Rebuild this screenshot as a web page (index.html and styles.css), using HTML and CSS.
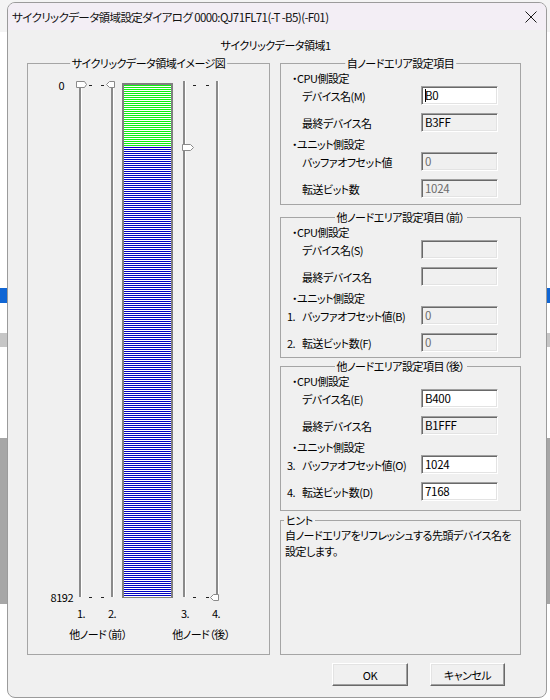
FILE: index.html
```html
<!DOCTYPE html>
<html lang="ja">
<head>
<meta charset="utf-8">
<title>サイクリックデータ領域設定ダイアログ</title>
<link rel="stylesheet" href="styles.css">
</head>
<body>
<div class="window">
  <div class="titlebar">
    <span class="title">サイクリックデータ領域設定ダイアログ 0000:QJ71FL71(-T -B5)(-F01)</span>
    <svg class="close" width="12" height="12" viewBox="0 0 12 12"><path d="M0.5 0.5L11.5 11.5M11.5 0.5L0.5 11.5" stroke="#1a1a1a" stroke-width="1" fill="none"/></svg>
  </div>
  <div class="client">
    <div class="subtitle">サイクリックデータ領域1</div>
    <div class="main">
      <div class="group image-group">
        <span class="legend">サイクリックデータ領域イメージ図</span>
        <div class="diagram">
          <div class="scale"><span class="s-top">0</span><span class="s-bottom">8192</span></div>
          <svg class="chart" width="149" height="524" viewBox="0 0 149 524" shape-rendering="crispEdges">
            <defs>
              <pattern id="pg" width="4" height="2" patternUnits="userSpaceOnUse">
                <rect width="4" height="2" fill="#ffffff"/>
                <rect width="4" height="1" fill="#10ee10"/>
              </pattern>
              <pattern id="pb" width="4" height="2" patternUnits="userSpaceOnUse">
                <rect width="4" height="2" fill="#ffffff"/>
                <rect width="4" height="1" fill="#0000c4"/>
              </pattern>
            </defs>
            <rect x="5" y="4" width="2" height="514" fill="#8a8a8a"/>
            <rect x="7" y="4" width="1" height="514" fill="#ffffff"/>
            <rect x="37" y="4" width="2" height="514" fill="#8a8a8a"/>
            <rect x="39" y="4" width="1" height="514" fill="#ffffff"/>
            <rect x="48" y="4" width="51" height="515" fill="#808080"/>
            <rect x="50" y="6" width="47" height="512" fill="#ffffff"/>
            <rect x="50" y="6" width="47" height="62" fill="url(#pg)"/>
            <rect x="50" y="68" width="47" height="449" fill="url(#pb)"/>
            <rect x="109" y="2" width="2" height="516" fill="#8a8a8a"/>
            <rect x="111" y="2" width="1" height="516" fill="#ffffff"/>
            <rect x="142" y="2" width="2" height="516" fill="#8a8a8a"/>
            <rect x="144" y="2" width="1" height="516" fill="#ffffff"/>
            <g fill="#222">
              <rect x="15" y="6" width="3" height="1"/>
              <rect x="27" y="6" width="3" height="1"/>
              <rect x="119" y="6" width="3" height="1"/>
              <rect x="132" y="6" width="3" height="1"/>
              <rect x="15" y="518" width="3" height="1"/>
              <rect x="27" y="518" width="3" height="1"/>
              <rect x="119" y="518" width="3" height="1"/>
              <rect x="132" y="518" width="3" height="1"/>
            </g>
            <g shape-rendering="auto" fill="#ffffff" stroke="#8a8a8a">
              <polygon points="2.5,2.5 10.5,2.5 12.5,5.5 10.5,8.5 2.5,8.5"/>
              <polygon points="40.5,2.5 35.5,2.5 32.5,5.5 35.5,8.5 40.5,8.5"/>
              <polygon points="108.5,65.5 116.5,65.5 119.5,68.5 116.5,71.5 108.5,71.5"/>
              <polygon points="144.5,515.5 139.5,515.5 136.5,518.5 139.5,521.5 144.5,521.5"/>
            </g>
          </svg>
        </div>
        <div class="track-nums">
          <span class="tn tn1">1.</span><span class="tn tn2">2.</span><span class="tn tn3">3.</span><span class="tn tn4">4.</span>
        </div>
        <div class="node-names">
          <span class="nn nn1">他ノード（前）</span><span class="nn nn2">他ノード（後）</span>
        </div>
      </div>

      <div class="right">
        <div class="group g1">
          <span class="legend">自ノードエリア設定項目</span>
          <div class="sec">・CPU側設定</div>
          <div class="field"><span class="num"></span><span class="label">デバイス名(M)</span><div class="box on"><span class="caret"></span>B0</div></div>
          <div class="field"><span class="num"></span><span class="label">最終デバイス名</span><div class="box">B3FF</div></div>
          <div class="sec">・ユニット側設定</div>
          <div class="field"><span class="num"></span><span class="label">バッファオフセット値</span><div class="box off">0</div></div>
          <div class="field"><span class="num"></span><span class="label">転送ビット数</span><div class="box off">1024</div></div>
        </div>

        <div class="group g2">
          <span class="legend">他ノードエリア設定項目（前）</span>
          <div class="sec">・CPU側設定</div>
          <div class="field"><span class="num"></span><span class="label">デバイス名(S)</span><div class="box off"></div></div>
          <div class="field"><span class="num"></span><span class="label">最終デバイス名</span><div class="box off"></div></div>
          <div class="sec">・ユニット側設定</div>
          <div class="field"><span class="num">1.</span><span class="label">バッファオフセット値(B)</span><div class="box off">0</div></div>
          <div class="field"><span class="num">2.</span><span class="label">転送ビット数(F)</span><div class="box off">0</div></div>
        </div>

        <div class="group g3">
          <span class="legend">他ノードエリア設定項目（後）</span>
          <div class="sec">・CPU側設定</div>
          <div class="field"><span class="num"></span><span class="label">デバイス名(E)</span><div class="box on">B400</div></div>
          <div class="field"><span class="num"></span><span class="label">最終デバイス名</span><div class="box">B1FFF</div></div>
          <div class="sec">・ユニット側設定</div>
          <div class="field"><span class="num">3.</span><span class="label">バッファオフセット値(O)</span><div class="box on">1024</div></div>
          <div class="field"><span class="num">4.</span><span class="label">転送ビット数(D)</span><div class="box on">7168</div></div>
        </div>

        <div class="group hint">
          <span class="legend left">ヒント</span>
          <p class="hint-text">自ノードエリアをリフレッシュする先頭デバイス名を<br>設定します。</p>
        </div>
      </div>
    </div>
    <div class="buttons">
      <button class="btn btn-ok" type="button">OK</button>
      <button class="btn btn-cancel" type="button">キャンセル</button>
    </div>
  </div>
</div>
</body>
</html>
```

FILE: styles.css
```css
* { box-sizing: border-box; }

html, body { margin: 0; }

body {
  width: 550px;
  height: 700px;
  overflow: hidden;
  padding: 2px 0 0 7px;
  font-family: "Noto Sans CJK JP", "Noto Sans", sans-serif;
  font-size: 11px;
  letter-spacing: -0.5px;
  font-feature-settings: "palt";
  color: #000;
  background: linear-gradient(to bottom,
    #f4f4f4 0, #f4f4f4 32px,
    #ffffff 32px, #ffffff 288px,
    #1066d4 288px, #1066d4 303px,
    #ffffff 303px, #ffffff 333px,
    #c6c6c6 333px, #c6c6c6 347px,
    #ffffff 347px, #ffffff 438px,
    #a6a6a6 438px, #a6a6a6 604px,
    #ffffff 604px);
}

.window {
  width: 540px;
  height: 696px;
  border: 1px solid #9b9b9b;
  border-radius: 8px;
  background: #f0f0f0;
  overflow: hidden;
  display: flex;
  flex-direction: column;
}

.titlebar {
  height: 27px;
  flex: none;
  display: flex;
  align-items: center;
  padding-left: 4px;
  background: #f3eef5;
}

.title {
  font-size: 11.5px;
  letter-spacing: -0.6px;
  white-space: nowrap;
  color: #111;
}

.close {
  margin-left: auto;
  margin-right: 9px;
}

.client {
  flex: 1;
  display: flex;
  flex-direction: column;
  padding: 7px 24px 0 19px;
}

.subtitle {
  height: 16px;
  line-height: 16px;
  text-align: center;
  padding-left: 2px;
}

.main {
  display: flex;
  gap: 10px;
  margin-top: 10px;
  height: 592px;
}

.group {
  position: relative;
  border: 1px solid #a5a5a5;
}

.legend {
  position: absolute;
  top: -8px;
  left: 50%;
  transform: translateX(-50%);
  padding: 0 2px;
  line-height: 14px;
  white-space: nowrap;
  background: #f0f0f0;
}

.legend.left {
  left: 3px;
  transform: none;
}

.image-group {
  width: 243px;
  height: 592px;
}

.diagram {
  display: flex;
  margin-top: 15px;
}

.scale {
  width: 46px;
  height: 524px;
  display: flex;
  flex-direction: column;
  justify-content: space-between;
  align-items: flex-end;
  line-height: 12px;
}

.s-top { padding-right: 10px; }
.s-bottom { padding-right: 1px; }

.chart { display: block; }

.track-nums {
  display: flex;
  margin-top: 4px;
  line-height: 12px;
}

.tn { width: 7px; white-space: nowrap; }
.tn1 { margin-left: 49px; }
.tn2 { margin-left: 24px; }
.tn3 { margin-left: 66px; }
.tn4 { margin-left: 24px; }

.node-names {
  display: flex;
  margin-top: 8px;
  line-height: 14px;
}

.nn { width: 70px; text-align: center; white-space: nowrap; }
.nn1 { margin-left: 35px; }
.nn2 { margin-left: 33px; }

.right {
  width: 241px;
  display: flex;
  flex-direction: column;
}

.g1, .g2, .g3 { padding-top: 7px; }
.g1 { height: 142px; }
.g2 { height: 141px; margin-top: 12px; }
.g3 { height: 145px; margin-top: 8px; }

.sec {
  height: 14px;
  line-height: 14px;
  padding-left: 11px;
  white-space: nowrap;
}

.field {
  display: flex;
  align-items: center;
  height: 19px;
  padding-left: 21px;
}

.sec + .field { margin-top: 1px; }
.field + .field { margin-top: 8px; }
.field + .sec { margin-top: 5px; }

.num {
  width: 15px;
  margin-left: -15px;
  white-space: nowrap;
}

.label {
  flex: 1;
  padding-top: 1px;
  white-space: nowrap;
}

.box {
  width: 77px;
  height: 19px;
  margin-right: 22px;
  padding-left: 3px;
  line-height: 17px;
  font-size: 11.5px;
  letter-spacing: -0.3px;
  white-space: nowrap;
  background: #f0f0f0;
  border: 1px solid;
  border-color: #a0a0a0 #ffffff #ffffff #a0a0a0;
  box-shadow: inset 1px 1px #696969, inset -1px -1px #e3e3e3;
}

.box.on { background: #ffffff; }
.box.off { color: #6d6d6d; }

.caret {
  display: inline-block;
  width: 1px;
  height: 13px;
  margin-right: -1px;
  vertical-align: -2px;
  background: #000;
}

.hint {
  height: 135px;
  margin-top: 9px;
}

.hint-text {
  margin: 0;
  padding: 6px 0 0 4px;
  line-height: 16px;
  white-space: nowrap;
}

.buttons {
  display: flex;
  justify-content: flex-end;
  gap: 22px;
  margin-top: 8px;
  padding-right: 17px;
}

.btn {
  height: 23px;
  padding: 0;
  font: inherit;
  letter-spacing: inherit;
  color: #000;
  background: #f0f0f0;
  border: 1px solid;
  border-color: #ffffff #696969 #696969 #ffffff;
  box-shadow: inset -1px -1px #a0a0a0, inset 1px 1px #e3e3e3;
}

.btn-ok { width: 76px; }
.btn-cancel { width: 75px; }
```
